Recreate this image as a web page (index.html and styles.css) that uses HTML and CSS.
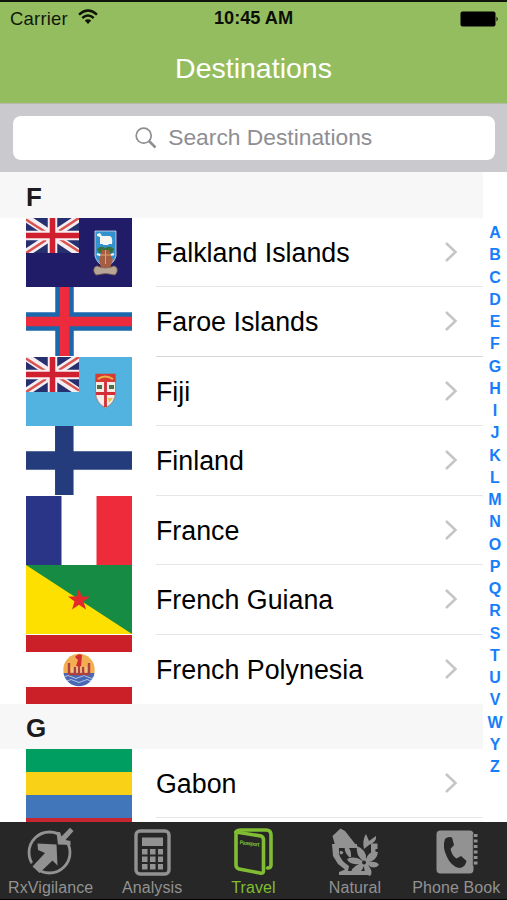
FILE: index.html
```html
<!DOCTYPE html>
<html lang="en">
<head>
<meta charset="utf-8">
<title>Destinations</title>
<link rel="stylesheet" href="styles.css">
</head>
<body>
<svg class="defs" aria-hidden="true">
  <defs>
    <symbol id="jack" viewBox="0 0 53 35" preserveAspectRatio="none">
      <rect width="53" height="35" fill="#26306f"/>
      <path d="M0 0L53 35M53 0L0 35" stroke="#f4eef2" stroke-width="8"/>
      <path d="M0 1.500L21 15M0 35L20 22M53 0L33 13M53 33.500L32 20" stroke="#d9534f" stroke-width="2.600"/>
      <path d="M26.500 0V35M0 17.500H53" stroke="#f7edf2" stroke-width="9.500"/>
      <path d="M26.500 0V35M0 17.500H53" stroke="#d0202f" stroke-width="5.500"/>
    </symbol>
    <symbol id="chev" viewBox="0 0 14 22"><path d="M2 2L11.500 11L2 20" fill="none" stroke="#c5c5c8" stroke-width="2.500"/></symbol>
  </defs>
</svg>
<div class="app">
  <header class="top">
    <div class="status">
      <div class="carrier">Carrier
        <svg width="20" height="16" viewBox="0 0 20 16"><path d="M1 5.600Q10-2.400 19 5.600M4.300 9Q10 4 15.700 9" fill="none" stroke="#0d1308" stroke-width="2.400"/><path d="M6.800 11.500Q10 8.800 13.200 11.500L10 15Z" fill="#0d1308"/></svg>
      </div>
      <div class="clock">10:45 AM</div>
      <div class="battery"><svg width="39" height="16" viewBox="0 0 39 16"><rect x=".5" y=".5" width="35" height="15" rx="2" fill="#000"/><path d="M36.500 5.500Q39 8 36.500 10.500Z" fill="#000"/></svg></div>
    </div>
    <h1>Destinations</h1>
  </header>
  <div class="search">
    <div class="field">
      <svg width="22" height="22" viewBox="0 0 22 22" fill="none" stroke="#8e8e93"><circle cx="8.700" cy="8.700" r="7.500" stroke-width="1.700"/><path d="M14 14L20.500 20.500" stroke-width="2.500"/></svg>
      <span>Search Destinations</span>
    </div>
  </div>
  <main>
    <div class="list">
      <h2 class="first">F</h2>
      <div class="row">
        <svg class="flag" viewBox="0 0 106 69" preserveAspectRatio="none"><rect width="106" height="69" fill="#201c68"/><use href="#jack" width="53" height="35"/>
          <path d="M69 13H90V38Q88 46 79.500 49Q71 46 69 38Z" fill="#3292cf" stroke="#d5dce8" stroke-width=".8"/><path d="M71 16L74 15L76 18H84Q87 19 86 26H83L82 27H77V26H74V19L71 18Z" fill="#f6f6f2"/><path d="M71 31Q75 27 79 30Q84 27 88 31L86 35H73Z" fill="#38733d"/><path d="M71 36Q79 40 88 36M73 42Q79 45 87 42" stroke="#eef3f8" stroke-width="2" fill="none"/><path d="M76 32H83L87 42L84 50H75L73 42Z" fill="#a65e43"/><path d="M75 37H85M79.500 32V46" stroke="#dda36d"/><path d="M68 54Q67 49 71 48Q75 50 79.500 50Q84 50 88 48Q92 49 91 54L89 57Q80 54 70 57Z" fill="#b7a596" stroke="#826653" stroke-width=".8"/></svg>
        <div class="cell"><span>Falkland Islands</span><svg class="chev"><use href="#chev"/></svg></div>
      </div>
      <div class="row">
        <svg class="flag" viewBox="0 0 106 69" preserveAspectRatio="none"><rect width="106" height="69" fill="#fff"/><path d="M38.500 0V69M0 34.500H106" stroke="#1c68ad" stroke-width="18.500"/><path d="M38.500 0V69M0 34.500H106" stroke="#ed2b3d" stroke-width="9.500"/></svg>
        <div class="cell strong"><span>Faroe Islands</span><svg class="chev"><use href="#chev"/></svg></div>
      </div>
      <div class="row">
        <svg class="flag" viewBox="0 0 106 69" preserveAspectRatio="none"><rect width="106" height="69" fill="#52b3e1"/><use href="#jack" width="53" height="35"/>
          <path d="M69.500 17H89.500V36Q89 46 79.500 51Q70 46 69.500 36Z" fill="#f5eee8" stroke="#8f6f70" stroke-width=".8"/><path d="M69.500 17H89.500V25H69.500Z" fill="#d83b35"/><path d="M72 22Q79 17 87 22" stroke="#e9b844" stroke-width="2" fill="none"/><path d="M79.500 25V50M70 36.500H89" stroke="#d42d37" stroke-width="2.800"/><path d="M71 30H76M83 30H88" stroke="#4b7044" stroke-width="4"/><path d="M82 41H87L83 46Z" fill="#e6c34d"/></svg>
        <div class="cell"><span>Fiji</span><svg class="chev"><use href="#chev"/></svg></div>
      </div>
      <div class="row">
        <svg class="flag" viewBox="0 0 106 69" preserveAspectRatio="none"><rect width="106" height="69" fill="#fff"/><path d="M38.300 0V69M0 34.500H106" stroke="#243c7b" stroke-width="18.500"/></svg>
        <div class="cell"><span>Finland</span><svg class="chev"><use href="#chev"/></svg></div>
      </div>
      <div class="row">
        <svg class="flag" viewBox="0 0 106 69" preserveAspectRatio="none"><rect width="106" height="69" fill="#fff"/><rect width="35.500" height="69" fill="#2b3588"/><rect x="70.500" width="35.500" height="69" fill="#ee2b3b"/></svg>
        <div class="cell"><span>France</span><svg class="chev"><use href="#chev"/></svg></div>
      </div>
      <div class="row">
        <svg class="flag" viewBox="0 0 106 69" preserveAspectRatio="none"><rect width="106" height="69" fill="#158b43"/><path d="M0 0V69H106Z" fill="#fde000"/><path d="M53 24L55.600 31.500H64L57.500 36.500L60 44.500L53 39.700L46 44.500L48.500 36.500L42 31.500H50.400Z" fill="#e32929"/></svg>
        <div class="cell"><span>French Guiana</span><svg class="chev"><use href="#chev"/></svg></div>
      </div>
      <div class="row">
        <svg class="flag" viewBox="0 0 106 69" preserveAspectRatio="none"><rect width="106" height="69" fill="#fff"/><path d="M0 0H106V17H0ZM0 52H106V69H0Z" fill="#cc2028"/>
          <circle cx="53" cy="34.500" r="15.700" fill="#f3ae51"/><path d="M37.500 38H68.500A15.700 15.700 0 0 1 37.500 38Z" fill="#4969b4"/><path d="M38 42Q42 39 46 42T54 42T62 42T68 42M41 46Q45 43 49 46T57 46T65 46" stroke="#cbd8f2" stroke-width=".8" fill="none"/><path d="M49 22Q52 18 56 20L55 31H50L52 25Z" fill="#d32a31"/><path d="M43 28V40M63 28V40M43 39H63M49 32V39M53 31V39M57 32V39" stroke="#ad413f" stroke-width="2.400"/><path d="M46 32V38M51 32V38M55 32V38M60 32V38" stroke="#f0d1bf"/></svg>
        <div class="cell last"><span>French Polynesia</span><svg class="chev"><use href="#chev"/></svg></div>
      </div>
      <h2>G</h2>
      <div class="row">
        <svg class="flag" viewBox="0 0 106 69" preserveAspectRatio="none"><rect width="106" height="23" fill="#009e60"/><rect y="23" width="106" height="23" fill="#f9d116"/><rect y="46" width="106" height="23" fill="#4276ba"/></svg>
        <div class="cell"><span>Gabon</span><svg class="chev"><use href="#chev"/></svg></div>
      </div>
      <div class="peek"></div>
    </div>
    <nav class="index">
      <a>A</a><a>B</a><a>C</a><a>D</a><a>E</a><a>F</a><a>G</a><a>H</a><a>I</a><a>J</a><a>K</a><a>L</a><a>M</a><a>N</a><a>O</a><a>P</a><a>Q</a><a>R</a><a>S</a><a>T</a><a>U</a><a>V</a><a>W</a><a>Y</a><a>Z</a>
    </nav>
  </main>
  <footer class="tabs">
    <div class="tab">
      <svg width="48" height="50" viewBox="0 0 48 50"><circle cx="22.500" cy="25.500" r="20.500" fill="none" stroke="#929292" stroke-width="2.800"/><path d="M33 14L46 1" stroke="#272727" stroke-width="11"/><path d="M3 45L11 37" stroke="#272727" stroke-width="10"/><path d="M10.500 16.500L29.500 17.500L30.500 38.500L25.500 33.500L12.500 46L5.500 39.500L18 26L11 23Z" fill="#929292"/><path d="M29.500 5.500L33 5L34.500 9.500L43 .8L46.500 4L38.500 13L43.500 14V18L31 17.500Z" fill="#929292"/></svg>
      <span>RxVigilance</span>
    </div>
    <div class="tab">
      <svg width="48" height="50" viewBox="0 0 48 50"><rect x="8" y="4" width="33" height="43" rx="4" fill="none" stroke="#929292" stroke-width="3.400"/><path d="M14 10.500H35V19H14ZM14 22H19.500V27.500H14ZM22 22H27.500V27.500H22ZM30 22H35V27.500H30ZM14 29.500H19.500V35H14ZM22 29.500H27.500V35H22ZM30 29.500H35V35H30ZM14 37H19.500V42.500H14ZM22 37H27.500V42.500H22ZM30 37H35V42.500H30Z" fill="#929292"/></svg>
      <span>Analysis</span>
    </div>
    <div class="tab active">
      <svg width="48" height="50" viewBox="0 0 48 50"><g fill="none" stroke="#80bd32" stroke-linejoin="round" stroke-linecap="round"><path d="M6 5L31 9Q33.500 10 33.500 13V44Q33.500 47 30 46L9 42Q6 41 6 38Z" stroke-width="3.600"/><path d="M6 5Q7 3 11 3H36Q41 3 41 8V38Q41 41 37.500 41" stroke-width="3.600"/></g><text x="9.500" y="17" transform="rotate(7 9.500 17)" font-size="5.500" font-weight="bold" textLength="20" fill="#80bd32">Passport</text></svg>
      <span>Travel</span>
    </div>
    <div class="tab">
      <svg width="48" height="50" viewBox="0 0 48 50">
        <path d="M1.500 9L9.500 1.500L14 4L25 18H4Z" fill="#929292"/>
        <path d="M1 17H26V21H8V27Q10 34 18 39L17 44H38V48H8V45L14 42.500L7 37L2 29Z" fill="#929292"/>
        <path d="M40 16.500H46.500V22H44.500V28L40 30Z" fill="#929292"/>
        <g fill="#929292">
          <path d="M18 30Q12 24 14 17Q21 22 20 30ZM12.500 25.500Q9 22 8.500 26Q10 29 12.500 25.500ZM33 22Q31 13 35 7L38 14L45 9Q46 15 38 18Z"/>
          <path d="M33 35Q24 28 26 19Q36 23 35 32Q38 23 47 25Q46 33 38 35Q46 34 48 38Q43 43 37 38Q43 45 39 49Q33 47 33 39Q29 49 20 48Q19 41 28 37Q18 38 16 32Q24 28 33 35Z"/>
        </g>
        <circle cx="33" cy="35.500" r="2" fill="#272727"/>
      </svg>
      <span>Natural</span>
    </div>
    <div class="tab">
      <svg width="48" height="50" viewBox="0 0 48 50"><rect x="4.500" y="3.500" width="37" height="43" rx="4" fill="#929292"/><path d="M43.500 7V39" stroke="#929292" stroke-width="4" stroke-dasharray="3 2.500"/><path d="M41.300 7V39" stroke="#272727" stroke-width=".8"/><path d="M13 12Q16 9 20 10.500L22 18L18.500 22Q20 29 24.500 31.500L29 29L34.500 34Q33 41 27 41Q19 39 15 30Q10 20 13 12Z" fill="#272727"/></svg>
      <span>Phone Book</span>
    </div>
  </footer>
</div>
</body>
</html>
```
FILE: styles.css
```css
* { box-sizing: border-box; }
body { margin: 0; background: #fff; font-family: "Liberation Sans", Arial, sans-serif; }
svg { display: block; flex: none; }
h1, h2 { margin: 0; }
.defs { position: absolute; width: 0; height: 0; }
.app { width: 507px; height: 900px; display: flex; flex-direction: column; overflow: hidden; }

.top { flex: none; height: 103px; background: #94bd60; border-top: 2px solid #10140b; }
.status { display: flex; align-items: center; height: 33px; padding: 0 8px 0 10px; font-size: 18px; color: #11180a; }
.carrier, .battery { flex: 1; display: flex; align-items: center; }
.carrier { gap: 10px; font-size: 18.500px; letter-spacing: .2px; }
.carrier svg { margin-top: -3px; }
.battery { justify-content: flex-end; }
.clock { position: relative; left: -1px; font-weight: bold; font-size: 18.200px; color: #0b1006; }
h1 { font-size: 28.500px; line-height: 32px; padding-top: 17px; font-weight: normal; text-align: center; color: #fff; }

.search { flex: none; height: 69px; padding: 12px 12.500px 12px 13px; background: #c9c9ce; border-top: 1px solid #b7b9ad; }
.field { height: 44px; display: flex; align-items: center; justify-content: center; gap: 11px; border-radius: 8px; background: #fff; color: #8e8e93; font-size: 22.800px; }
.field span { position: relative; top: -1px; }

main { flex: none; height: 650px; display: flex; overflow: hidden; }
.list { width: 483px; }
h2 { height: 44.500px; padding-left: 26px; background: #f7f7f7; font-size: 26px; line-height: 48px; color: #1c1c1c; }
h2.first { height: 45.500px; line-height: 50px; }
.row { display: flex; gap: 24px; height: 69.500px; padding-left: 26px; }
.flag { width: 106px; height: 69px; }
.cell { flex: 1; display: flex; align-items: center; justify-content: space-between; padding-right: 25px; border-bottom: 1px solid #e6e6e8; font-size: 26.800px; color: #000; }
.cell span { padding-top: 3px; }
.cell.strong { border-color: #d3d7d6; }
.cell.last { border-color: transparent; }
.chev { width: 14px; height: 22px; }
.peek { width: 106px; height: 6px; margin-left: 26px; background: #c52632; }

.index { width: 24px; padding-top: 50px; display: flex; flex-direction: column; align-items: center; }
.index a { height: 22.260px; line-height: 22px; font-size: 16px; font-weight: bold; color: #177efb; }

.tabs { flex: 1; display: flex; background: #272727; border-bottom: 1px solid #000; }
.tab { flex: 1; display: flex; flex-direction: column; align-items: center; padding-top: 5px; font-size: 16px; line-height: 18px; letter-spacing: .1px; color: #929292; white-space: nowrap; }
.tab span { margin-top: 2px; }
.tab.active { color: #80bd32; }
```
